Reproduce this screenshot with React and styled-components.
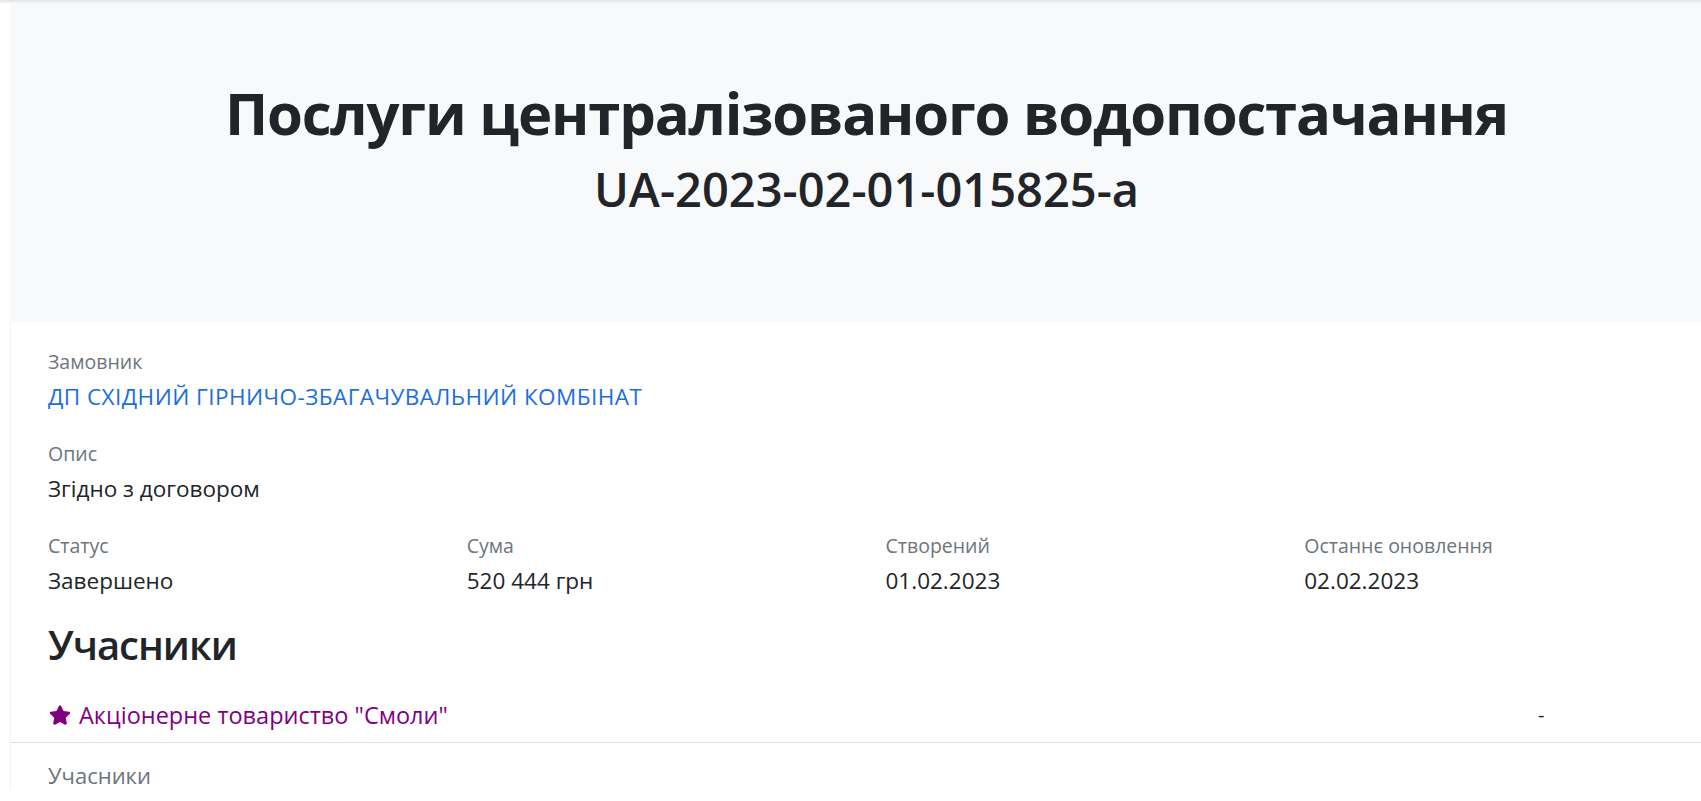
import React from "react";
import styled, { createGlobalStyle } from "styled-components";
import { FaStar } from "react-icons/fa";

const Global = createGlobalStyle`
  html, body { margin: 0; padding: 0; background: #fff; overflow-x: hidden; }
  body {
    font-family: "Open Sans", "Noto Sans", sans-serif;
    font-size: 20px;
    line-height: 1.5;
    color: #212529;
  }
  * { box-sizing: border-box; }
`;

const TopShadow = styled.div`
  height: 3px;
  width: 1723px;
  background: linear-gradient(#e3e4e6, #f3f4f5);
`;

const Page = styled.div`
  width: 1723px;
  padding-left: 10px;
`;

const Hero = styled.header`
  background: #f8f9fa;
  height: 319px;
  padding-top: 74px;
  text-align: center;
`;

const Title = styled.h1`
  margin: 0;
  font-size: 58px;
  line-height: 72px;
  font-weight: 700;
  letter-spacing: -1.2px;
  color: #212529;
`;

const Subtitle = styled.h2`
  margin: 12px 0 0;
  font-size: 47px;
  line-height: 56px;
  font-weight: 600;
  color: #212529;
`;

const Main = styled.main`
  border-left: 1px solid #f0f1f2;
  padding-top: 26px;
`;

const Section = styled.section`
  padding-left: 37px;
`;

const Field = styled.div`
  margin-bottom: 26px;
`;

const Label = styled.div`
  font-size: 19.5px;
  line-height: 28px;
  margin-bottom: 4px;
  color: #6c757d;
`;

const Value = styled.div`
  font-size: 22.5px;
  line-height: 34px;
  letter-spacing: ${(p) => (p.$link ? "0.45px" : "0")};
  color: ${(p) => (p.$link ? "#1a6ee0" : "#212529")};
`;

const Grid = styled.div`
  display: grid;
  grid-template-columns: repeat(4, 1fr);
`;

const Heading = styled.h3`
  margin: -4px 0 0;
  font-size: 40px;
  line-height: 50px;
  font-weight: 600;
  letter-spacing: -1px;
  color: #212529;
`;

const Table = styled.div`
  margin-top: 22px;
`;

const Row = styled.div`
  display: grid;
  grid-template-columns: 1fr 185px;
  align-items: center;
  padding: 7px 0 11px 38px;
  border-bottom: 1px solid #dcdee0;
`;

const Participant = styled.a`
  display: inline-flex;
  align-items: center;
  gap: 8px;
  color: #800080;
  text-decoration: none;
  font-size: 23.5px;
  line-height: 32px;
`;

const Dash = styled.span`
  font-size: 20px;
  line-height: 30px;
  color: #212529;
`;

const SubLabel = styled.div`
  padding: 17px 0 0 37px;
  font-size: 22px;
  line-height: 30px;
  color: #6c757d;
`;

export default function App() {
  return (
    <>
      <Global />
      <TopShadow />
      <Page>
        <Hero>
          <Title>Послуги централізованого водопостачання</Title>
          <Subtitle>UA-2023-02-01-015825-a</Subtitle>
        </Hero>
        <Main>
          <Section>
            <Field>
              <Label>Замовник</Label>
              <Value $link>ДП СХІДНИЙ ГІРНИЧО-ЗБАГАЧУВАЛЬНИЙ КОМБІНАТ</Value>
            </Field>
            <Field>
              <Label>Опис</Label>
              <Value>Згідно з договором</Value>
            </Field>
            <Grid>
              <Field>
                <Label>Статус</Label>
                <Value>Завершено</Value>
              </Field>
              <Field>
                <Label>Сума</Label>
                <Value>520 444 грн</Value>
              </Field>
              <Field>
                <Label>Створений</Label>
                <Value>01.02.2023</Value>
              </Field>
              <Field>
                <Label>Останнє оновлення</Label>
                <Value>02.02.2023</Value>
              </Field>
            </Grid>
            <Heading>Учасники</Heading>
          </Section>
          <Table>
            <Row>
              <Participant href="#">
                <FaStar size={22} />
                Акціонерне товариство "Смоли"
              </Participant>
              <Dash>-</Dash>
            </Row>
          </Table>
          <SubLabel>Учасники</SubLabel>
        </Main>
      </Page>
    </>
  );
}
